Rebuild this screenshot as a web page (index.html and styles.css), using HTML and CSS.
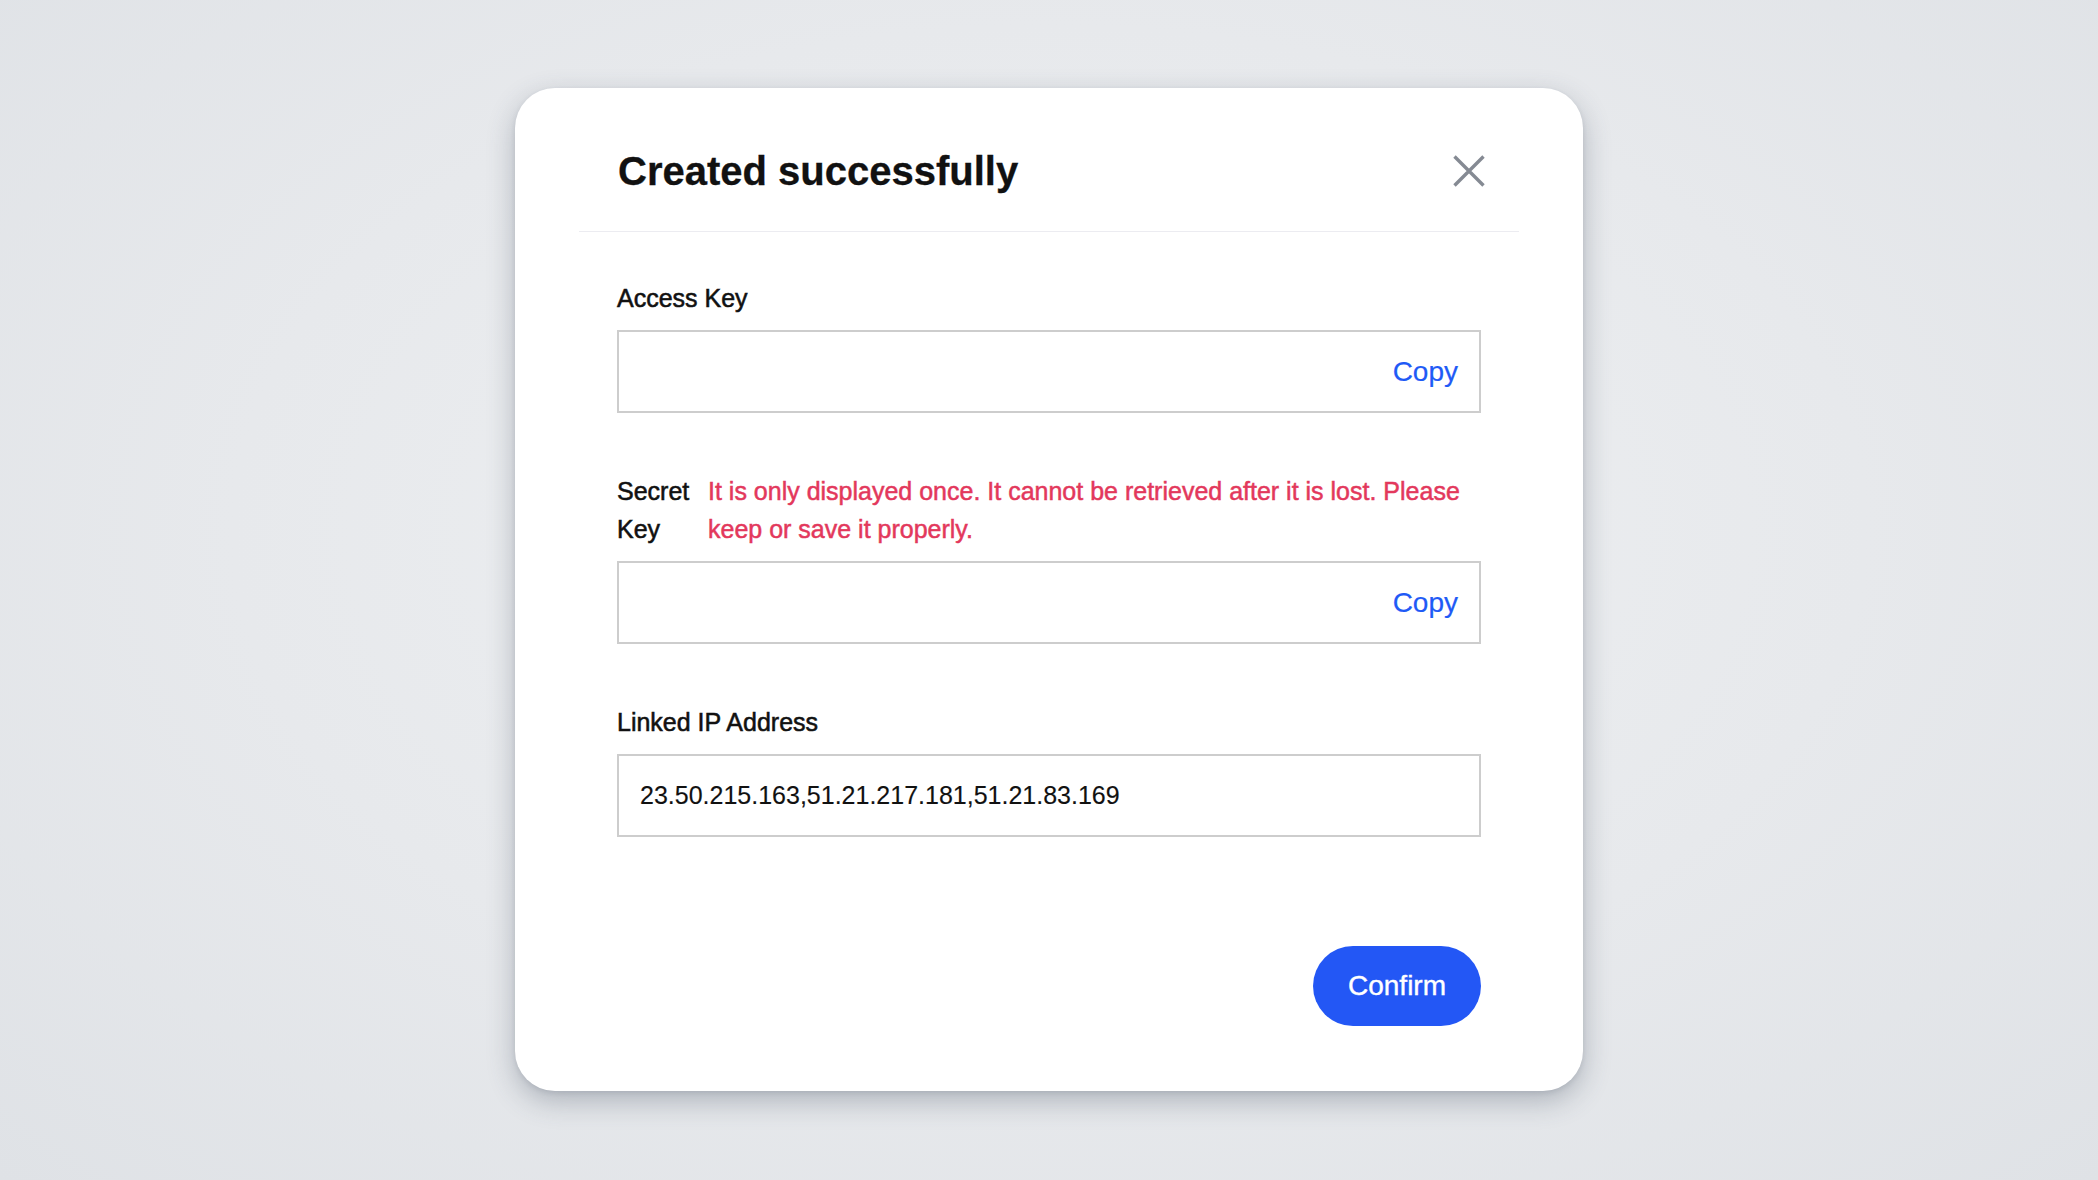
FILE: index.html
```html
<!DOCTYPE html>
<html lang="en">
<head>
<meta charset="utf-8">
<title>Created successfully</title>
<link rel="stylesheet" href="styles.css">
</head>
<body>
  <div class="dialog">
    <div class="dialog-header">
      <h1 class="dialog-title">Created successfully</h1>
      <button class="close-btn" aria-label="Close">
        <svg width="32" height="32" viewBox="0 0 32 32"><path d="M1.5 1.5 L30.5 30.5 M30.5 1.5 L1.5 30.5" stroke="#858a93" stroke-width="3.4" fill="none"/></svg>
      </button>
    </div>
    <div class="dialog-body">
      <div class="field">
        <div class="field-label">Access Key</div>
        <div class="field-box">
          <span class="field-value"></span>
          <span class="copy">Copy</span>
        </div>
      </div>
      <div class="field">
        <div class="field-label-row">
          <div class="field-label narrow">Secret Key</div>
          <div class="warning">It is only displayed once. It cannot be retrieved after it is lost. Please keep or save it properly.</div>
        </div>
        <div class="field-box">
          <span class="field-value"></span>
          <span class="copy">Copy</span>
        </div>
      </div>
      <div class="field">
        <div class="field-label">Linked IP Address</div>
        <div class="field-box">
          <span class="field-value">23.50.215.163,51.21.217.181,51.21.83.169</span>
        </div>
      </div>
      <div class="dialog-footer">
        <button class="confirm-btn">Confirm</button>
      </div>
    </div>
  </div>
</body>
</html>
```
FILE: styles.css
```css
* { box-sizing: border-box; }

html, body {
  margin: 0;
  padding: 0;
}

body {
  width: 2098px;
  height: 1180px;
  overflow: hidden;
  font-family: "Liberation Sans", Arial, sans-serif;
  color: #111111;
  background: radial-gradient(ellipse at 50% 45%, #eef0f2 0%, #e7e9ec 55%, #dfe2e6 100%);
  display: flex;
  justify-content: center;
  align-items: flex-start;
}

.dialog {
  margin-top: 88px;
  width: 1068px;
  background: #ffffff;
  border-radius: 40px;
  box-shadow: 0 10px 28px rgba(60, 70, 90, 0.32), 0 2px 5px rgba(40, 50, 70, 0.10);
}

.dialog-header {
  margin: 0 64px;
  padding: 55px 34px 32px 39px;
  border-bottom: 1px solid #ececf1;
  display: flex;
  justify-content: space-between;
  align-items: center;
}

.dialog-title {
  margin: 0;
  font-size: 40px;
  line-height: 56px;
  font-weight: 700;
  color: #111111;
  -webkit-text-stroke: 0.3px #111111;
}

.close-btn {
  width: 32px;
  height: 32px;
  padding: 0;
  border: none;
  background: transparent;
  display: flex;
  align-items: center;
  justify-content: center;
  cursor: pointer;
}

.dialog-body {
  padding: 47px 102px 65px 102px;
}

.field {
  margin-bottom: 59px;
}

.field:last-of-type {
  margin-bottom: 0;
}

.field-label {
  font-size: 25px;
  line-height: 38px;
  color: #111111;
  -webkit-text-stroke: 0.55px #111111;
  margin-bottom: 13px;
}

.field-label-row {
  display: flex;
  gap: 13px;
  margin-bottom: 13px;
}

.field-label.narrow {
  width: 78px;
  flex: none;
  margin-bottom: 0;
}

.warning {
  flex: 1;
  font-size: 25px;
  line-height: 38px;
  color: #e3385c;
  -webkit-text-stroke: 0.5px #e3385c;
}

.field-box {
  height: 83px;
  border: 2px solid #cdcdcd;
  display: flex;
  align-items: center;
  justify-content: space-between;
  padding: 0 21px 0 21px;
}

.field-value {
  font-size: 25px;
  color: #111111;
  -webkit-text-stroke: 0.15px #111111;
}

.copy {
  font-size: 28px;
  color: #1f5af6;
  -webkit-text-stroke: 0.2px #1f5af6;
  cursor: pointer;
}

.dialog-footer {
  margin-top: 109px;
  display: flex;
  justify-content: flex-end;
}

.confirm-btn {
  height: 80px;
  width: 168px;
  border: none;
  border-radius: 40px;
  background: #2357f5;
  color: #ffffff;
  font-family: "Liberation Sans", Arial, sans-serif;
  font-size: 28px;
  -webkit-text-stroke: 0.4px #ffffff;
  cursor: pointer;
}
```
